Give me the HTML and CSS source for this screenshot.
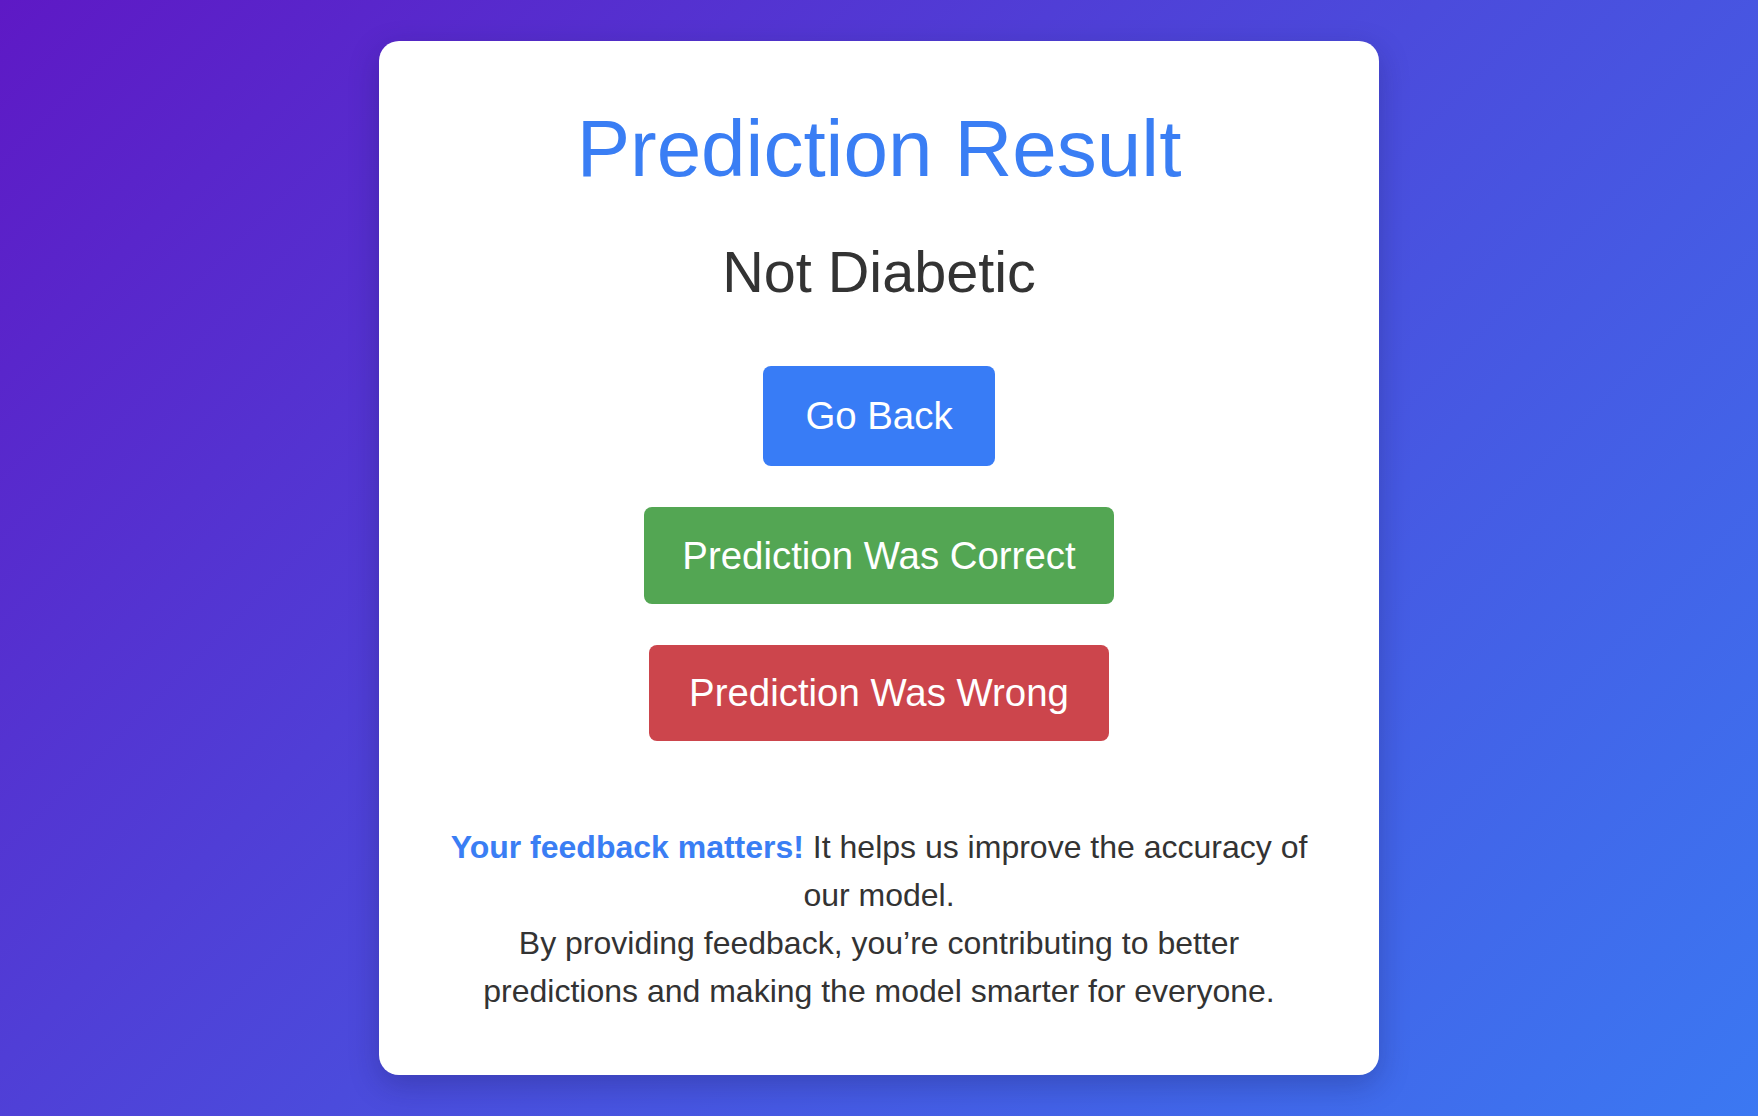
FILE: index.html
```html
<!DOCTYPE html>
<html lang="en">
<head>
<meta charset="utf-8">
<title>Prediction Result</title>
<link rel="stylesheet" href="styles.css">
</head>
<body>
  <main class="card">
    <h1 class="title">Prediction Result</h1>
    <h2 class="result">Not Diabetic</h2>
    <div class="actions">
      <a class="btn btn-back" href="#">Go Back</a>
      <button class="btn btn-correct" type="button">Prediction Was Correct</button>
      <button class="btn btn-wrong" type="button">Prediction Was Wrong</button>
    </div>
    <p class="feedback"><strong class="highlight">Your feedback matters!</strong> It helps us improve the accuracy of our model.<br>By providing feedback, you’re contributing to better predictions and making the model smarter for everyone.</p>
  </main>
</body>
</html>
```
FILE: styles.css
```css
* {
  box-sizing: border-box;
}

html, body {
  margin: 0;
  padding: 0;
}

body {
  min-height: 100vh;
  display: flex;
  align-items: center;
  justify-content: center;
  font-family: "Liberation Sans", Arial, sans-serif;
  color: #333333;
  background: linear-gradient(135deg, #5e19c5 0%, #4b4bdc 50%, #3b78f2 100%);
}

.card {
  width: 1000px;
  background: #ffffff;
  border-radius: 20px;
  padding: 60px 64px 60px;
  text-align: center;
  box-shadow: 0 10px 30px rgba(20, 20, 80, 0.28);
}

.title {
  margin: 0;
  font-size: 80px;
  line-height: 96px;
  font-weight: 400;
  color: #3a7ef4;
}

.result {
  margin: 41px 0 0;
  font-size: 57.6px;
  line-height: 69px;
  font-weight: 400;
  color: #333333;
}

.actions {
  margin-top: 59px;
  display: flex;
  flex-direction: column;
  align-items: center;
  gap: 41px;
}

.btn {
  display: inline-block;
  border: none;
  border-radius: 8px;
  font-family: "Liberation Sans", Arial, sans-serif;
  font-size: 38.4px;
  line-height: 44px;
  color: #ffffff;
  text-decoration: none;
  padding: 26.3px 38.4px;
  cursor: pointer;
}

.btn-back {
  background: #387cf6;
  padding: 28.3px 42px;
}

.btn-correct {
  background: #53a653;
}

.btn-wrong {
  background: #cc454c;
  padding: 26.3px 40.5px;
}

.feedback {
  margin: 82px 0 0;
  font-size: 32px;
  line-height: 48px;
  color: #333333;
}

.highlight {
  color: #3a7ef4;
  font-weight: 700;
}
```
